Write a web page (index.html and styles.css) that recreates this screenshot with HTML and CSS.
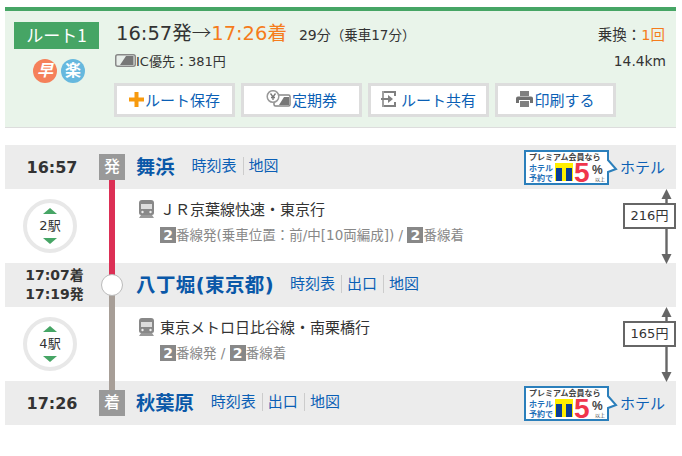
FILE: index.html
```html
<!DOCTYPE html>
<html lang="ja">
<head>
<meta charset="utf-8">
<title>ルート1</title>
<link rel="stylesheet" href="styles.css">
</head>
<body>
<main class="page">
  <section class="summary">
    <div class="route-col">
      <div class="route-label">ルート1</div>
      <div class="route-marks">
        <span class="mark mark-fast">早</span>
        <span class="mark mark-easy">楽</span>
      </div>
    </div>
    <div class="summary-main">
      <div class="sum-row sum-row-time">
        <div class="times">16:57発<span class="arrow-char">→</span><span class="orange">17:26着</span></div>
        <div class="duration">29分</div>
        <div class="duration-sub">（乗車17分）</div>
        <div class="transfers">乗換：<span class="orange">1回</span></div>
      </div>
      <div class="sum-row sum-row-fare">
        <svg class="ic-icon" width="21" height="13" viewBox="0 0 21 13"><rect x=".75" y=".75" width="19.500" height="11.500" rx="2" fill="#e8eeea" stroke="#888" stroke-width="1.500"/><path d="M5 11 L11 2 H18.500 V11 Z" fill="#777"/></svg>
        <div class="fare-text">IC優先：381円</div>
        <div class="distance">14.4km</div>
      </div>
      <div class="buttons">
        <a class="btn"><svg width="15" height="15" viewBox="0 0 15 15"><path d="M5.500 0h4v5.500H15v4H9.500V15h-4V9.500H0v-4h5.500z" fill="#f79a0e"/></svg>ルート保存</a>
        <a class="btn"><svg width="25" height="18" viewBox="0 0 25 18"><rect x="8" y="5" width="16" height="11" rx="1.500" fill="#fff" stroke="#888" stroke-width="1.500"/><path d="M13 15 L18 7 H23 V15 Z" fill="#777"/><circle cx="7" cy="6.500" r="5.800" fill="#fff" stroke="#999" stroke-width="1.500"/><path d="M4.500 3.500 7 7l2.500-3.500M7 7v3M5 7.500h4" fill="none" stroke="#777" stroke-width="1.300"/></svg>定期券</a>
        <a class="btn btn-share"><svg width="16" height="16" viewBox="0 0 16 16"><path d="M3 1h11v4M14 11v4H3" fill="none" stroke="#808080" stroke-width="2"/><path d="M2 0v16" stroke="#808080" stroke-width="1.500"/><path d="M0 7h7V4l5 4-5 4V9H0z" fill="#808080"/></svg>ルート共有</a>
        <a class="btn"><svg width="17" height="16" viewBox="0 0 17 16"><path d="M4 0h9v5H4z" fill="#808080"/><path d="M2 5.500h13a2 2 0 0 1 2 2V12h-3V9H3v3H0V7.500a2 2 0 0 1 2-2z" fill="#707070"/><path d="M4 10h9v6H4z" fill="#808080"/></svg>印刷する</a>
      </div>
    </div>
  </section>

  <section class="route">
    <div class="stop">
      <div class="stop-time">16:57</div>
      <div class="marker"><span class="marker-badge">発</span><span class="seg seg-red"></span></div>
      <h2 class="stop-name">舞浜</h2>
      <nav class="links"><a>時刻表</a><a>地図</a></nav>
      <div class="hotel">
        <svg class="banner" width="93" height="35" viewBox="0 0 93 35">
          <path d="M1 1H84V10L92 19L84 22V34H1Z" fill="#fff" stroke="#2b7fbb" stroke-width="2"/>
          <text class="bn-top" x="5" y="10">プレミアム会員なら</text>
          <text class="bn-side" x="5" y="21">ホテル</text>
          <text class="bn-side" x="5" y="31">予約で</text>
          <rect x="31" y="13" width="18" height="18" fill="#ffee00"/>
          <rect x="32" y="18" width="6" height="13" fill="#0a3f96"/>
          <rect x="42" y="18" width="6" height="13" fill="#0a3f96"/>
          <text class="bn-five" x="50" y="32">5</text>
          <text class="bn-pct" x="68" y="24">%</text>
          <text class="bn-small" x="71" y="31">以上</text>
        </svg>
        <a class="hotel-link">ホテル</a>
      </div>
    </div>

    <div class="leg">
      <div class="count-col">
        <div class="count"><i class="tri tri-up"></i><span>2駅</span><i class="tri tri-down"></i></div>
      </div>
      <div class="marker"><span class="seg seg-red"></span></div>
      <div class="leg-body">
        <div class="line-name">
          <svg class="train" width="17" height="18" viewBox="0 0 17 18"><path d="M4 0h9a3 3 0 0 1 3 3v10a2 2 0 0 1-2 2H3a2 2 0 0 1-2-2V3a3 3 0 0 1 3-3z" fill="#888"/><rect x="3" y="4" width="11" height="5" fill="#ddd"/><circle cx="4.500" cy="12" r="1.200" fill="#eee"/><circle cx="12.500" cy="12" r="1.200" fill="#eee"/><path d="M3 15 1 18h15l-2-3z" fill="#999"/></svg>
          <span class="line-title">ＪＲ京葉線快速・東京行</span>
        </div>
        <div class="line-info"><b class="num">2</b>番線発(乗車位置：前/中[10両編成]) / <b class="num">2</b>番線着</div>
      </div>
      <div class="fare">
        <svg class="arrow" width="53" height="15" viewBox="0 0 53 15"><path d="M43.500 8v7" stroke="#666" stroke-width="2.400"/><path d="M38.500 10 43.500 0l5 10z" fill="#666"/></svg>
        <div class="fare-box">216円</div>
        <svg class="arrow" width="53" height="35" viewBox="0 0 53 35"><path d="M43.500 0v27" stroke="#666" stroke-width="2.400"/><path d="M38.500 25 43.500 35l5-10z" fill="#666"/></svg>
      </div>
    </div>

    <div class="stop">
      <div class="stop-time stop-time-two">17:07着<br>17:19発</div>
      <div class="marker marker-mid"><span class="seg seg-red"></span><span class="seg seg-gray"></span><span class="node"></span></div>
      <h2 class="stop-name stop-name-wide">八丁堀(東京都)</h2>
      <nav class="links"><a>時刻表</a><a>出口</a><a>地図</a></nav>
    </div>

    <div class="leg">
      <div class="count-col">
        <div class="count"><i class="tri tri-up"></i><span>4駅</span><i class="tri tri-down"></i></div>
      </div>
      <div class="marker"><span class="seg seg-gray"></span></div>
      <div class="leg-body">
        <div class="line-name">
          <svg class="train" width="17" height="18" viewBox="0 0 17 18"><path d="M4 0h9a3 3 0 0 1 3 3v10a2 2 0 0 1-2 2H3a2 2 0 0 1-2-2V3a3 3 0 0 1 3-3z" fill="#888"/><rect x="3" y="4" width="11" height="5" fill="#ddd"/><circle cx="4.500" cy="12" r="1.200" fill="#eee"/><circle cx="12.500" cy="12" r="1.200" fill="#eee"/><path d="M3 15 1 18h15l-2-3z" fill="#999"/></svg>
          <span class="line-title">東京メトロ日比谷線・南栗橋行</span>
        </div>
        <div class="line-info"><b class="num">2</b>番線発 / <b class="num">2</b>番線着</div>
      </div>
      <div class="fare">
        <svg class="arrow" width="53" height="15" viewBox="0 0 53 15"><path d="M43.500 8v7" stroke="#666" stroke-width="2.400"/><path d="M38.500 10 43.500 0l5 10z" fill="#666"/></svg>
        <div class="fare-box">165円</div>
        <svg class="arrow" width="53" height="35" viewBox="0 0 53 35"><path d="M43.500 0v27" stroke="#666" stroke-width="2.400"/><path d="M38.500 25 43.500 35l5-10z" fill="#666"/></svg>
      </div>
    </div>

    <div class="stop">
      <div class="stop-time">17:26</div>
      <div class="marker marker-end"><span class="seg seg-gray"></span><span class="marker-badge">着</span></div>
      <h2 class="stop-name">秋葉原</h2>
      <nav class="links"><a>時刻表</a><a>出口</a><a>地図</a></nav>
      <div class="hotel">
        <svg class="banner" width="93" height="35" viewBox="0 0 93 35">
          <path d="M1 1H84V10L92 19L84 22V34H1Z" fill="#fff" stroke="#2b7fbb" stroke-width="2"/>
          <text class="bn-top" x="5" y="10">プレミアム会員なら</text>
          <text class="bn-side" x="5" y="21">ホテル</text>
          <text class="bn-side" x="5" y="31">予約で</text>
          <rect x="31" y="13" width="18" height="18" fill="#ffee00"/>
          <rect x="32" y="18" width="6" height="13" fill="#0a3f96"/>
          <rect x="42" y="18" width="6" height="13" fill="#0a3f96"/>
          <text class="bn-five" x="50" y="32">5</text>
          <text class="bn-pct" x="68" y="24">%</text>
          <text class="bn-small" x="71" y="31">以上</text>
        </svg>
        <a class="hotel-link">ホテル</a>
      </div>
    </div>
  </section>
</main>
</body>
</html>
```

FILE: styles.css
```css
* { box-sizing: border-box; }

html, body { margin: 0; padding: 0; background: #fff; }

body {
  font-family: "DejaVu Sans", "Noto Sans CJK JP", sans-serif;
  color: #333;
  overflow: hidden;
}

.page {
  width: 671px;
  margin-left: 5px;
  padding-top: 7px;
}

.orange { color: #f57c1c; }

/* summary */
.summary {
  display: flex;
  height: 121px;
  background: #e9f4ea;
  border-top: 4px solid #46a565;
  border-bottom: 1px solid #ddd;
}

.route-col {
  width: 109px;
  padding: 11px 0 0 9px;
  flex: none;
}

.route-label {
  width: 85px;
  height: 27px;
  background: #46a565;
  color: #fff;
  font-size: 17px;
  font-family: "Noto Sans CJK JP", sans-serif;
  line-height: 25px;
  text-align: center;
}

.route-marks {
  display: flex;
  gap: 4px;
  margin: 10px 0 0 19px;
}

.mark {
  width: 24px;
  height: 24px;
  border-radius: 50%;
  color: #fff;
  font-size: 16px;
  font-weight: 700;
  line-height: 23px;
  text-align: center;
}

.mark-fast { background: #f5805a; font-style: italic; }
.mark-easy { background: #66b8de; }

.summary-main { flex: 1; min-width: 0; }

.sum-row { display: flex; align-items: baseline; }

.sum-row-time {
  height: 36px;
  padding: 8px 11px 0 2px;
}

.times { font-size: 19.500px; line-height: 26px; white-space: nowrap; }

.arrow-char { font-family: "Noto Sans CJK JP", sans-serif; font-weight: 300; }

.duration { font-size: 14px; margin-left: 12px; }

.duration-sub { font-size: 13.500px; }

.transfers { font-size: 14.500px; margin-left: auto; }

.sum-row-fare {
  height: 24px;
  padding: 3px 10px 0 1px;
  align-items: center;
}

.ic-icon { flex: none; }

.fare-text { font-size: 13px; white-space: nowrap; }

.distance { font-size: 13.800px; margin-left: auto; }

.buttons {
  display: flex;
  gap: 6px;
  margin-top: 12px;
}

.btn {
  width: 121px;
  height: 34px;
  display: flex;
  align-items: center;
  justify-content: center;
  gap: 1px;
  padding-bottom: 2px;
  background: #fff;
  border: 3px solid #ddd;
  color: #0b5fb5;
  font-size: 15px;
  white-space: nowrap;
}

.btn-share { gap: 4px; }

/* route */
.route { margin-top: 17px; }

.stop {
  display: flex;
  align-items: center;
  height: 44px;
  background: #ececec;
}

.stop-time {
  width: 94px;
  flex: none;
  font-size: 16px;
  font-weight: 700;
  text-align: center;
}

.stop-time-two {
  font-size: 14px;
  line-height: 19px;
  margin-top: -1px;
  padding-left: 5px;
}

.marker {
  position: relative;
  width: 26px;
  flex: none;
  align-self: stretch;
  display: flex;
  flex-direction: column;
  align-items: center;
}

.stop .marker { padding-top: 9px; }

.stop .marker-mid, .stop .marker-end { padding-top: 0; }

.marker-badge {
  flex: none;
  width: 26px;
  height: 26px;
  background: #999;
  color: #fff;
  font-size: 16px;
  line-height: 25px;
  text-align: center;
  font-weight: 500;
}

.seg { display: block; width: 6px; flex: 1; }

.seg-red { background: #dc2f55; }

.seg-gray { background: #a79e97; }

.marker-end .seg { flex: none; height: 9px; }

.node {
  position: absolute;
  left: 2px;
  top: 11px;
  width: 22px;
  height: 22px;
  border-radius: 50%;
  background: #fff;
  border: 1.500px solid #bbb;
}

.stop-name {
  margin: 0 0 3px 11px;
  font-size: 19.300px;
  font-weight: 700;
  color: #0a58a8;
  white-space: nowrap;
}

.stop-name-wide { font-size: 19.500px; letter-spacing: .4px; }

.links { display: flex; margin: 0 0 2px 17px; }

.stop-name-wide + .links { margin-left: 16px; }

.links a {
  color: #0b5fb5;
  font-size: 15px;
  line-height: 18px;
  padding: 0 6px 0 5px;
  border-left: 1px solid #ccc;
}

.links a:first-child { padding-left: 0; border-left: 0; }

.hotel {
  display: flex;
  align-items: center;
  margin-left: auto;
  padding-right: 11px;
}

.banner { display: block; overflow: visible; }

.hotel-link {
  margin: 0 0 2px 3px;
  color: #0b5fb5;
  font-size: 15px;
}

.bn-top { font-size: 8px; font-weight: 700; fill: #444; }
.bn-side { font-size: 8px; font-weight: 700; fill: #1e6fb8; }
.bn-five { font-size: 28px; font-weight: 700; fill: #f0354c; font-family: "Liberation Sans", sans-serif; }
.bn-pct { font-size: 12px; font-weight: 700; fill: #444; font-family: "Liberation Sans", sans-serif; }
.bn-small { font-size: 5px; fill: #444; }

.leg {
  display: flex;
  height: 74px;
}

.count-col {
  width: 94px;
  flex: none;
  padding: 10px 0 0 18px;
}

.count {
  width: 54px;
  height: 54px;
  border: 4px solid #e8e8e8;
  border-radius: 50%;
  display: flex;
  flex-direction: column;
  align-items: center;
  justify-content: center;
  gap: 3px;
  font-size: 13px;
  line-height: 18px;
}

.tri {
  width: 0;
  height: 0;
  border-left: 7.500px solid transparent;
  border-right: 7.500px solid transparent;
}

.tri-up { border-bottom: 6px solid #46a565; }
.tri-down { border-top: 6px solid #46a565; }

.leg-body {
  flex: 1;
  min-width: 0;
  padding: 9px 0 0 13px;
}

.line-name {
  display: flex;
  align-items: center;
  gap: 5px;
  height: 22px;
  font-size: 15px;
  white-space: nowrap;
}

.line-title { margin-bottom: 2px; }

.train { flex: none; }

.line-info {
  margin: 6px 0 0 22px;
  color: #888;
  font-size: 13.500px;
  line-height: 18px;
  white-space: nowrap;
}

.num {
  display: inline-block;
  width: 16px;
  height: 16px;
  background: #888;
  color: #fff;
  font-size: 14px;
  line-height: 16px;
  text-align: center;
}

.fare {
  width: 53px;
  flex: none;
  display: flex;
  flex-direction: column;
}

.arrow { display: block; flex: none; }

.fare-box {
  height: 26px;
  margin-top: -1px;
  border: 2px solid #666;
  background: #fff;
  font-size: 13px;
  line-height: 22px;
  text-align: center;
}
```
